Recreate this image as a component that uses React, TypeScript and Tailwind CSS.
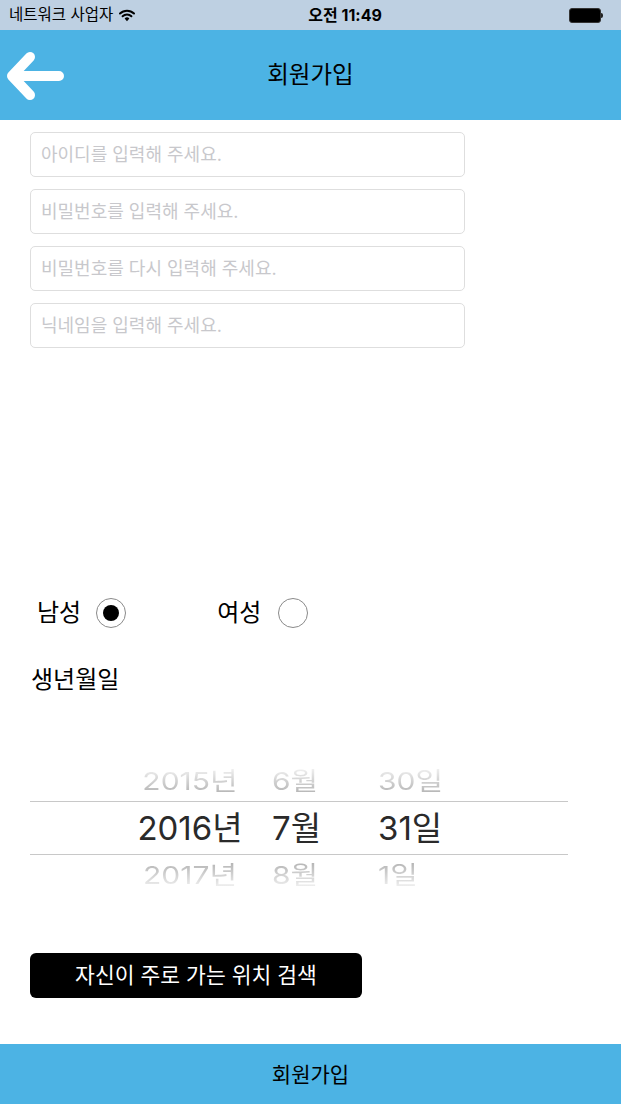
import { useState } from 'react'

const fields = [
    '아이디를 입력해 주세요.',
    '비밀번호를 입력해 주세요.',
    '비밀번호를 다시 입력해 주세요.',
    '닉네임을 입력해 주세요.',
]

function WifiIcon() {
    return <svg width="16" height="13" viewBox="0 0 16 13">
        <path d="M1 4.5 A10 10 0 0 1 15 4.5" fill="none" stroke="#000" strokeWidth="2" strokeLinecap="round" />
        <path d="M3.6 7.3 A6.3 6.3 0 0 1 12.4 7.3" fill="none" stroke="#000" strokeWidth="2" strokeLinecap="round" />
        <path d="M5.6 9.6 L8 12.3 L10.4 9.6 A3.3 3.3 0 0 0 5.6 9.6 Z" fill="#000" />
    </svg>
}

function BackArrow() {
    return <svg width="60" height="54" viewBox="0 0 60 54">
        <path d="M6 27 H52 M23 8 L5 27 L23 46" fill="none" stroke="#fff" strokeWidth="10" strokeLinecap="round" strokeLinejoin="round" />
    </svg>
}

function Radio({ checked, onClick }: { checked: boolean, onClick: () => void }) {
    return <button onClick={onClick} className="w-[30px] h-[30px] rounded-full border-[1.5px] border-[#8a8a8a] flex items-center justify-center bg-white">
        {checked && <span className="w-[16px] h-[16px] rounded-full bg-black" />}
    </button>
}

function PickerRow({ year, month, day, faded }: { year: string, month: string, day: string, faded?: 'top' | 'bottom' }) {
    const fade = faded === 'top'
        ? 'text-transparent bg-clip-text bg-gradient-to-b from-[#f0f0f0] to-[#b5b5b5]'
        : 'text-transparent bg-clip-text bg-gradient-to-b from-[#b5b5b5] to-[#f0f0f0]'
    const size = faded ? 'text-[30px] scale-y-[0.82]' : 'text-[33px] text-[#2a2a2a]'

    return <div className={`flex items-center leading-none ${faded ? 'h-10' : 'h-[52px]'}`}>
        <div className="w-[100px]" />
        <span className={`w-[120px] text-center ${size} ${faded ? fade : ''}`}>{year}</span>
        <span className={`ml-[22px] w-[84px] origin-left ${size} ${faded ? fade : ''}`}>{month}</span>
        <span className={`ml-[22px] origin-left ${size} ${faded ? fade : ''}`}>{day}</span>
    </div>
}

export default function App() {
    const [gender, setGender] = useState<'m' | 'f'>('m')

    return <div className="w-[621px] h-[1104px] flex flex-col bg-white font-['Inter','Noto_Sans_CJK_KR',sans-serif] text-black overflow-hidden">
        {/* status bar */}
        <div className="h-[30px] bg-[#bed0e2] flex items-center px-[9px] relative">
            <span className="text-[15.5px] leading-none">네트워크 사업자</span>
            <span className="ml-[6px]"><WifiIcon /></span>
            <span className="flex-1 text-center text-[16px] font-bold leading-none pr-[14px]">오전 11:49</span>
            <div className="flex items-center mr-[9px]">
                <div className="w-[32px] h-[15px] rounded-[3px] bg-black border border-[#333]" />
                <div className="w-[2px] h-[5px] bg-[#222] rounded-r-sm" />
            </div>
        </div>

        {/* header */}
        <div className="h-[90px] bg-[#4cb3e4] flex items-center relative">
            <div className="pl-[7px] pt-[2px]">
                <BackArrow />
            </div>
            <h1 className="flex-1 text-center text-[23.5px] pr-[67px] leading-none">회원가입</h1>
        </div>

        {/* form */}
        <div className="flex flex-col gap-3 mt-3 pl-[30px]">
            {fields.map((placeholder, index) => (
                <input
                    key={index}
                    type={index === 1 || index === 2 ? 'password' : 'text'}
                    placeholder={placeholder}
                    className="w-[435px] h-[45px] rounded-[5px] border border-[#dedede] px-[10px] text-[18px] outline-none placeholder:text-[#c8c8cc]"
                />
            ))}
        </div>

        {/* gender */}
        <div className="flex items-center mt-[250px] pl-[37px] h-[30px]">
            <span className="text-[24px] leading-none">남성</span>
            <div className="ml-[15px]">
                <Radio checked={gender === 'm'} onClick={() => setGender('m')} />
            </div>
            <span className="ml-[91px] text-[24px] leading-none">여성</span>
            <div className="ml-[17px]">
                <Radio checked={gender === 'f'} onClick={() => setGender('f')} />
            </div>
        </div>

        <div className="mt-[37px] pl-[31px] h-[30px] flex items-center text-[24px] leading-none">
            생년월일
        </div>

        {/* date picker */}
        <div className="mt-[66px] mx-[30px] w-[538px] flex flex-col">
            <PickerRow year="2015년" month="6월" day="30일" faded="top" />
            <div className="border-y border-[#c8c8c8]">
                <PickerRow year="2016년" month="7월" day="31일" />
            </div>
            <PickerRow year="2017년" month="8월" day="1일" faded="bottom" />
        </div>

        <div className="mt-[58px] pl-[30px]">
            <button className="w-[332px] h-[45px] rounded-[6px] bg-black text-white text-[21.5px] leading-none">
                자신이 주로 가는 위치 검색
            </button>
        </div>

        <button className="mt-auto h-[60px] bg-[#4cb3e4] text-[21px] text-black leading-none">
            회원가입
        </button>
    </div>
}
